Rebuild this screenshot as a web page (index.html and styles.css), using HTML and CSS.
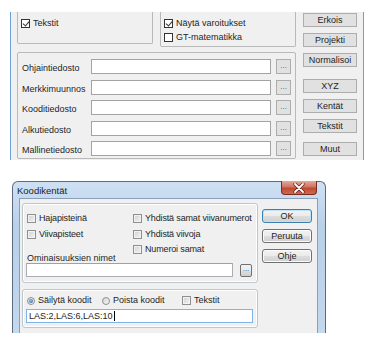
FILE: index.html
```html
<!DOCTYPE html>
<html lang="fi">
<head>
  <meta charset="UTF-8" />
  <title>Asetukset</title>
  <link rel="stylesheet" href="styles.css">
</head>
<body>
  <div class="opts">
    <div class="main">
      <div class="top-row">
        <div class="gb gb-top gb-a">
          <div class="chk"><span class="box on"></span>Tekstit</div>
        </div>
        <div class="gb gb-top gb-b">
          <div class="chk"><span class="box on"></span>Näytä varoitukset</div>
          <div class="chk"><span class="box"></span>GT-matematikka</div>
        </div>
      </div>
      <div class="gb files">
        <div class="frow"><span class="flabel">Ohjaintiedosto</span><span class="field"></span><span class="dots">...</span></div>
        <div class="frow"><span class="flabel">Merkkimuunnos</span><span class="field"></span><span class="dots">...</span></div>
        <div class="frow"><span class="flabel">Kooditiedosto</span><span class="field"></span><span class="dots">...</span></div>
        <div class="frow"><span class="flabel">Alkutiedosto</span><span class="field"></span><span class="dots">...</span></div>
        <div class="frow"><span class="flabel">Mallinetiedosto</span><span class="field"></span><span class="dots">...</span></div>
      </div>
    </div>
    <div class="side">
      <span class="btn">Erkois</span>
      <span class="btn">Projekti</span>
      <span class="btn">Normalisoi</span>
      <span class="btn push">XYZ</span>
      <span class="btn">Kentät</span>
      <span class="btn">Tekstit</span>
      <span class="btn push-sm">Muut</span>
    </div>
  </div>

  <div class="dialog">
    <div class="titlebar">
      <span class="title">Koodikentät</span>
      <span class="close">
        <svg width="12" height="10" viewBox="0 0 12 10">
          <path d="M2 1 L10 9 M10 1 L2 9" stroke="#5a1d12" stroke-width="3.2" stroke-linecap="round"/>
          <path d="M2 1 L10 9 M10 1 L2 9" stroke="#fff" stroke-width="1.8" stroke-linecap="round"/>
        </svg>
      </span>
    </div>
    <div class="client">
      <div class="dlg-main">
        <div class="dgb dgb1">
          <div class="checks">
            <div class="chk"><span class="wbox"></span>Hajapisteinä</div>
            <div class="chk"><span class="wbox"></span>Yhdistä samat viivanumerot</div>
            <div class="chk"><span class="wbox"></span>Viivapisteet</div>
            <div class="chk"><span class="wbox"></span>Yhdistä viivoja</div>
            <div></div>
            <div class="chk"><span class="wbox"></span>Numeroi samat</div>
          </div>
          <div class="names-label">Ominaisuuksien nimet</div>
          <div class="names-row"><span class="wfield names"></span><span class="wdots">...</span></div>
        </div>
        <div class="dgb dgb2">
          <div class="radios">
            <div class="chk r1"><span class="radio on"></span>Säilytä koodit</div>
            <div class="chk r2"><span class="radio"></span>Poista koodit</div>
            <div class="chk"><span class="wbox"></span>Tekstit</div>
          </div>
          <div class="wfield codes focus">LAS:2,LAS:6,LAS:10<span class="caret"></span></div>
        </div>
      </div>
      <div class="dlg-side">
        <span class="wbtn default">OK</span>
        <span class="wbtn">Peruuta</span>
        <span class="wbtn">Ohje</span>
      </div>
    </div>
  </div>
</body>
</html>
```

FILE: styles.css
```css
* { box-sizing: border-box; }
body {
  margin: 0;
  width: 385px;
  height: 341px;
  overflow: hidden;
  background: #fff;
  font-family: "Liberation Sans", Arial, sans-serif;
  font-size: 9px;
  color: #1e1e1e;
}

/* ylempi asetusikkuna */
.opts {
  display: flex;
  gap: 7px;
  margin: 12px 0 0 10px;
  width: 354px;
  height: 148px;
  padding: 0 6px;
  background: #f0f0f0;
  border-left: 1px solid #6f9fd4;
  border-right: 1px solid #6f9fd4;
}
.main { width: 279px; display: flex; flex-direction: column; }
.top-row { display: flex; gap: 7px; }
.gb { border: 1px solid #b9b9b9; border-radius: 2px; }
.gb-top { width: 136px; border-top: none; border-radius: 0 0 2px 2px; padding: 7px 3px 0; }
.gb-a { height: 32px; }
.gb-b { height: 35px; display: flex; flex-direction: column; gap: 5px; }

.chk { display: flex; align-items: center; gap: 3px; height: 9px; line-height: 9px; white-space: nowrap; }
.box {
  width: 9px; height: 9px;
  border: 1px solid #333;
  background: #fff;
  position: relative;
}
.box.on::after {
  content: "";
  position: absolute;
  left: 2px; top: 0;
  width: 3px; height: 5px;
  border-right: 1px solid #333;
  border-bottom: 1px solid #333;
  transform: rotate(40deg);
}

.files {
  margin-top: 5px;
  height: 107px;
  padding: 6px 4px 0;
  display: flex;
  flex-direction: column;
  gap: 5.5px;
}
.frow { display: flex; height: 15px; align-items: flex-end; }
.flabel { width: 70px; padding-bottom: 1px; }
.field { width: 181px; height: 15px; background: #fff; border: 1px solid #a3a3a3; }
.dots {
  width: 15px; height: 15px; margin-left: 5px;
  background: #e1e1e1; border: 1px solid #adadad;
  font-size: 8px; line-height: 11px; text-align: center; color: #555;
}

.side { width: 54px; display: flex; flex-direction: column; gap: 6px; padding-top: 1px; }
.btn {
  height: 14px;
  background: #e1e1e1;
  border: 1px solid #adadad;
  text-align: center;
  line-height: 12px;
}
.btn.push { margin-top: 6px; }
.btn.push-sm { margin-top: 3px; }

/* Koodikentät-dialogi */
.dialog {
  margin: 21px 0 0 12px;
  width: 314px;
  height: 152px;
  padding: 0 7px 0 6px;
  display: flex;
  flex-direction: column;
  border: 1px solid #5c6b7e;
  border-bottom: none;
  border-radius: 6px 6px 0 0;
  background: linear-gradient(#cfe0f3, #b9d0ea 30%, #bed4ec 70%, #c4d8ee);
}
.titlebar { height: 16px; display: flex; justify-content: space-between; align-items: flex-start; }
.title { margin: 4px 0 0 -2px; line-height: 10px; font-size: 9.5px; }
.close {
  width: 36px; height: 14px;
  margin: -1px 1px 0 0;
  display: flex; align-items: center; justify-content: center;
  border: 1px solid #7b2a1c;
  border-top: none;
  border-radius: 0 0 4px 4px;
  background: linear-gradient(#e5a999, #cf7360 45%, #bd4a33 55%, #cd6a52);
}
.client {
  flex: 1;
  display: flex;
  gap: 4px;
  padding: 4px 0 0 2px;
  background: #f0f0f0;
  border: 1px solid #8a9fba;
  border-bottom: none;
}
.dlg-main { width: 236px; display: flex; flex-direction: column; gap: 6px; }
.dgb { border: 1px solid #bcc6cd; border-radius: 3px; box-shadow: inset 0 0 0 1px #fff; }
.dgb1 { height: 80px; padding: 10px 3px 0; }
.dgb2 { height: 39px; padding: 6px 3px 0; }
.checks {
  display: grid;
  grid-template-columns: 106px auto;
  row-gap: 6.5px;
  margin-left: 1px;
  letter-spacing: -0.15px;
}
.wbox {
  width: 9px; height: 9px;
  border: 1px solid #8f8f8f;
  background: linear-gradient(135deg, #d0d0d0, #f4f4f4);
  box-shadow: inset 0 0 0 1px #f2f2f2;
}
.names-label { height: 9px; line-height: 9px; margin-left: 1px; }
.names-row { display: flex; gap: 7px; }
.wfield {
  height: 14px;
  background: #fff;
  border: 1px solid #abadb3;
  border-top-color: #9ea1a8;
}
.names { width: 207px; }
.wdots {
  width: 12px; height: 13px; margin-top: 1px;
  border: 1px solid #707070;
  border-radius: 2px;
  background: linear-gradient(#f2f2f2, #ebebeb 50%, #dddddd 51%, #cfcfcf);
  font-size: 8px; line-height: 8px; text-align: center; color: #1d3f78;
}
.radios { display: flex; margin-left: 1px; height: 9px; }
.r1 { width: 75px; }
.r2 { width: 80px; }
.radio {
  width: 8px; height: 8px;
  border: 1px solid #8f8f8f;
  border-radius: 50%;
  background: linear-gradient(135deg, #d6d6d6, #f6f6f6);
  position: relative;
}
.radio.on::after {
  content: "";
  position: absolute;
  left: 1px; top: 1px;
  width: 4px; height: 4px;
  border-radius: 50%;
  background: radial-gradient(circle at 40% 35%, #8cc3f2, #1f5aa6);
}
.codes {
  margin-top: 4px;
  width: 227px;
  padding-left: 2px;
  line-height: 12px;
  display: flex;
  align-items: center;
}
.focus { border-color: #7eb4ea; }
.caret { width: 1px; height: 10px; background: #000; margin-left: 1px; }
.dlg-side { width: 50px; margin-top: 6px; display: flex; flex-direction: column; gap: 6px; }
.wbtn {
  height: 14px;
  border: 1px solid #707070;
  border-radius: 3px;
  background: linear-gradient(#f2f2f2, #ebebeb 50%, #dddddd 51%, #cfcfcf);
  box-shadow: inset 0 0 0 1px #fcfcfc;
  text-align: center;
  line-height: 12px;
}
.wbtn.default { border-color: #3c7fb1; box-shadow: inset 0 0 0 1px #bfe2f7; }
```
